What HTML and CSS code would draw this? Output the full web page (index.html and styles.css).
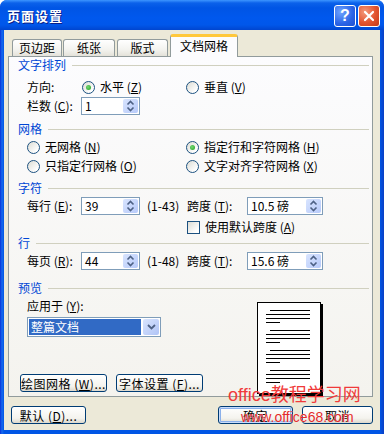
FILE: index.html
```html
<!DOCTYPE html>
<html lang="zh-CN">
<head>
<meta charset="utf-8">
<title>页面设置</title>
<link rel="stylesheet" href="styles.css">
</head>
<body>
<div class="window">
  <div class="titlebar">
    <span class="title">页面设置</span>
    <div class="tb-buttons">
      <span class="tb-btn help">?</span>
      <span class="tb-btn close"><svg width="12" height="12" viewBox="0 0 12 12"><path d="M2 2 L10 10 M10 2 L2 10" stroke="#fff" stroke-width="2.2" stroke-linecap="round"/></svg></span>
    </div>
  </div>
  <div class="client">
    <div class="tabs">
      <div class="tab t1">页边距</div>
      <div class="tab t2">纸张</div>
      <div class="tab t3">版式</div>
      <div class="tab active">文档网格</div>
    </div>
    <div class="panel">
      <div class="gh">文字排列</div>
      <div class="row r-dir">
        <span class="lbl w55">方向:</span>
        <span class="opt w104"><span class="radio on"></span>水平 (<u>Z</u>)</span>
        <span class="opt"><span class="radio"></span>垂直 (<u>V</u>)</span>
      </div>
      <div class="row r-col">
        <span class="lbl w54">栏数 (<u>C</u>):</span>
        <span class="spin w59"><span class="val">1</span><span class="spb"><svg width="11" height="14" viewBox="0 0 11 14"><path d="M2.5 5.5 L5.5 2.5 L8.5 5.5 M2.5 8.5 L5.5 11.5 L8.5 8.5" fill="none" stroke="#4d6185" stroke-width="1.6"/></svg></span></span>
      </div>
      <div class="gh mt6">网格</div>
      <div class="row r-g1">
        <span class="opt w159"><span class="radio"></span>无网格 (<u>N</u>)</span>
        <span class="opt"><span class="radio on"></span>指定行和字符网格 (<u>H</u>)</span>
      </div>
      <div class="row r-g2">
        <span class="opt w159"><span class="radio"></span>只指定行网格 (<u>O</u>)</span>
        <span class="opt"><span class="radio"></span>文字对齐字符网格 (<u>X</u>)</span>
      </div>
      <div class="gh mt6">字符</div>
      <div class="row r-num">
        <span class="lbl w54">每行 (<u>E</u>):</span>
        <span class="spin w59"><span class="val">39</span><span class="spb"><svg width="11" height="14" viewBox="0 0 11 14"><path d="M2.5 5.5 L5.5 2.5 L8.5 5.5 M2.5 8.5 L5.5 11.5 L8.5 8.5" fill="none" stroke="#4d6185" stroke-width="1.6"/></svg></span></span>
        <span class="range">(1-43)</span>
        <span class="lbl w61">跨度 (<u>T</u>):</span>
        <span class="spin w76"><span class="val">10.5 磅</span><span class="spb"><svg width="11" height="14" viewBox="0 0 11 14"><path d="M2.5 5.5 L5.5 2.5 L8.5 5.5 M2.5 8.5 L5.5 11.5 L8.5 8.5" fill="none" stroke="#4d6185" stroke-width="1.6"/></svg></span></span>
      </div>
      <div class="row r-chk">
        <span class="opt"><span class="check"></span>使用默认跨度 (<u>A</u>)</span>
      </div>
      <div class="gh">行</div>
      <div class="row r-num">
        <span class="lbl w54">每页 (<u>R</u>):</span>
        <span class="spin w59"><span class="val">44</span><span class="spb"><svg width="11" height="14" viewBox="0 0 11 14"><path d="M2.5 5.5 L5.5 2.5 L8.5 5.5 M2.5 8.5 L5.5 11.5 L8.5 8.5" fill="none" stroke="#4d6185" stroke-width="1.6"/></svg></span></span>
        <span class="range">(1-48)</span>
        <span class="lbl w61">跨度 (<u>T</u>):</span>
        <span class="spin w76"><span class="val">15.6 磅</span><span class="spb"><svg width="11" height="14" viewBox="0 0 11 14"><path d="M2.5 5.5 L5.5 2.5 L8.5 5.5 M2.5 8.5 L5.5 11.5 L8.5 8.5" fill="none" stroke="#4d6185" stroke-width="1.6"/></svg></span></span>
      </div>
      <div class="gh mt10">预览</div>
      <div class="preview">
        <div class="pv-left">
          <div class="row r-apply"><span class="lbl">应用于 (<u>Y</u>):</span></div>
          <div class="select">
            <span class="sel-text">整篇文档</span>
            <span class="sel-btn"><svg width="9" height="6" viewBox="0 0 9 6"><path d="M1 1 L4.5 4.5 L8 1" fill="none" stroke="#4d6185" stroke-width="1.8"/></svg></span>
          </div>
          <div class="pv-buttons">
            <span class="btn b-grid">绘图网格 (<u>W</u>)...</span>
            <span class="btn b-font">字体设置 (<u>F</u>)...</span>
          </div>
        </div>
        <div class="page">
          <svg width="66" height="94" viewBox="0 0 66 94">
            <rect x="2" y="2" width="64" height="92" fill="#000"/>
            <rect x="0.5" y="0.5" width="63" height="91" fill="#fff" stroke="#000"/>
            <g stroke="#000" stroke-width="1">
              <path d="M13 8.5H53 M9 12.5H53 M9 16.5H53 M9 20.5H23"/>
              <path d="M13 28.5H53 M9 32.5H53 M9 36.5H53 M9 40.5H23"/>
              <path d="M13 48.5H53 M9 52.5H53 M9 56.5H53 M9 60.5H23"/>
              <path d="M13 68.5H53 M9 72.5H53 M9 76.5H53 M9 80.5H23"/>
            </g>
          </svg>
        </div>
      </div>
    </div>
    <div class="footer">
      <span class="btn b-def">默认 (<u>D</u>)...</span>
      <span class="spacer"></span>
      <span class="btn b-ok focus">确定</span>
      <span class="btn b-cancel">取消</span>
    </div>
  </div>
  <div class="wm wm1">office教程学习网</div>
  <div class="wm wm2">www.office68.com</div>
</div>
</body>
</html>
```
FILE: styles.css
```css
* { box-sizing: border-box; }
html, body { margin: 0; padding: 0; }
body {
  width: 384px; height: 434px; overflow: hidden;
  font-family: "Noto Sans CJK SC", "Liberation Sans", sans-serif;
  font-size: 12px; color: #000; background: #fff;
}
u { text-decoration: underline; text-underline-offset: 1px; }

.window {
  position: relative;
  width: 384px; height: 434px;
  background: linear-gradient(90deg, #0831d9 0, #166aee 2px, #0055e5 4px, #0055e5 380px, #0b3fc4 384px);
  display: flex; flex-direction: column;
  border-radius: 7px 7px 0 0; overflow: hidden;
}
.titlebar {
  height: 30px; flex: none;
  display: flex; align-items: center; justify-content: space-between;
  padding: 1px 4px 0 7px;
  background: linear-gradient(#3d95ff 0, #0b61ea 3px, #0055e5 8px, #0058ee 18px, #0057ea 25px, #0045cf 30px);
}
.title {
  color: #fff; font-weight: bold; font-size: 13px; letter-spacing: 1px;
  text-shadow: 1px 1px 0 #0a1f86;
}
.tb-buttons { display: flex; gap: 2px; }
.tb-btn {
  width: 22px; height: 22px; border: 1px solid #fff; border-radius: 3px;
  display: flex; align-items: center; justify-content: center;
  color: #fff; font-family: "Liberation Sans", sans-serif; font-weight: bold; font-size: 16px;
}
.help { background: radial-gradient(circle at 30% 30%, #6fa4ff, #2a63e6 60%, #1e4fd0); }
.close { background: radial-gradient(circle at 30% 30%, #f49a7c, #e2532f 55%, #c23a18); }

.client {
  flex: 1; margin: 0 4px 4px 4px;
  background: #ece9d8;
  display: flex; flex-direction: column;
}
.tabs {
  height: 26px; flex: none;
  display: flex; align-items: flex-end;
  padding-left: 8px;
}
.tab {
  height: 17px; line-height: 15px; text-align: center;
  border: 1px solid #919b9c; border-bottom: none;
  border-radius: 3px 3px 0 0;
  background: linear-gradient(#ffffff, #f3f3ef 60%, #e4e2d9);
}
.t1 { width: 50px; }
.t2 { width: 52px; margin-left: 1px; }
.t3 { width: 51px; margin-left: 2px; }
.tab.active {
  width: 68px; height: 23px; margin-left: 2px; margin-bottom: -1px;
  position: relative; z-index: 1;
  background: #fcfcfe;
  border-top: 3px solid #ffc83c;
  line-height: 18px;
  border-radius: 3px 3px 0 0;
}

.panel {
  flex: none;
  margin-left: 4px; width: 365px; height: 341px;
  border: 1px solid #919b9c;
  background: linear-gradient(#fcfcfe, #f4f3ee);
  padding: 0 3px 0 9px;
}
.gh {
  display: flex; align-items: center; height: 16px; line-height: 16px;
  color: #0046d5;
}
.gh::after {
  content: ""; flex: 1; height: 1px; background: #d0d0bf; margin-left: 6px; margin-top: 1px;
}
.mt6 { margin-top: 6px; }
.mt10 { margin-top: 10px; }

.row { display: flex; align-items: center; padding-left: 9px; line-height: 16px; white-space: nowrap; }
.r-dir { height: 18px; margin-top: 5px; }
.r-col { height: 18px; margin-top: 1px; }
.r-g1 { height: 16px; margin-top: 2px; }
.r-g2 { height: 16px; margin-top: 3px; }
.r-num { height: 18px; margin-top: 1px; }
.r-chk { height: 16px; margin-top: 4px; padding-left: 168px; }

.lbl { display: inline-block; }
.w54 { width: 54px; }
.w55 { width: 55px; }
.w61 { width: 60px; }
.w104 { width: 104px; }
.w159 { width: 159px; }
.w59 { width: 59px; }
.w76 { width: 76px; }

.opt { display: inline-flex; align-items: center; }
.radio {
  width: 13px; height: 13px; border-radius: 50%;
  border: 1px solid #1c5180;
  background: linear-gradient(135deg, #dcdcd4, #ffffff 80%);
  margin-right: 4px; position: relative; flex: none;
}
.radio.on::after {
  content: ""; position: absolute; left: 3px; top: 3px;
  width: 5px; height: 5px; border-radius: 50%;
  background: radial-gradient(circle at 40% 40%, #74d774, #21a121);
}
.opt .radio { margin-right: 5px; }
.check {
  width: 13px; height: 13px; border: 1px solid #1c5180;
  background: linear-gradient(135deg, #dcdcd4, #ffffff 80%);
  margin-right: 5px; margin-left: 1px; flex: none;
}

.spin {
  height: 18px; border: 1px solid #7f9db9; background: #fff;
  display: inline-flex; align-items: center; justify-content: space-between;
  padding: 1px 1px 1px 3px;
}
.spin .val { line-height: 14px; }
.spb {
  width: 15px; height: 14px; border-radius: 2px;
  background: linear-gradient(135deg, #d8e4fe, #b7cafa);
  display: flex; align-items: center; justify-content: center;
}
.range { width: 47px; padding-left: 7px; }

.preview { display: flex; }
.pv-left { width: 239px; display: flex; flex-direction: column; }
.r-apply { height: 16px; margin-top: 2px; }
.select {
  margin-top: 3px; margin-left: 9px; width: 134px; height: 20px;
  border: 1px solid #7f9db9; background: #fff;
  display: flex; align-items: center; padding: 1px;
}
.sel-text {
  flex: 1; height: 16px; line-height: 16px;
  background: #316ac5; color: #fff; padding-left: 2px; margin-right: 2px;
}
.sel-btn {
  width: 16px; height: 16px; border-radius: 2px;
  background: linear-gradient(135deg, #d8e4fe, #b0c4f6);
  display: flex; align-items: center; justify-content: center;
}
.pv-buttons { display: flex; margin-top: 37px; margin-left: 2px; gap: 9px; }
.btn {
  display: inline-flex; align-items: center; justify-content: center;
  height: 18px; border: 1px solid #003c74; border-radius: 3px;
  background: linear-gradient(#ffffff, #f4f3ee 70%, #dcd8cc);
  white-space: nowrap; letter-spacing: 0.5px;
}
.b-grid { width: 87px; }
.b-font { width: 87px; }
.page { margin-top: 6px; line-height: 0; }

.footer {
  flex: 1; display: flex; align-items: flex-start;
  padding: 9px 7px 0 7px;
}
.spacer { flex: 1; }
.b-def { width: 75px; }
.b-ok { width: 75px; }
.b-cancel { width: 71px; margin-left: 9px; }
.btn.focus { box-shadow: inset 0 0 0 1px #c9dcfb, inset 0 0 0 2px #8bb0ea; }

.wm { position: absolute; white-space: nowrap; z-index: 5; }
.wm1 {
  left: 228px; top: 385px;
  font-family: "Liberation Sans", "Noto Sans CJK SC", sans-serif;
  font-size: 18px; line-height: 20px; color: #f03a3a;
}
.wm2 {
  left: 241px; top: 409px;
  font-family: "Liberation Sans", sans-serif;
  font-size: 14px; line-height: 16px; color: #e32a2a;
  text-shadow: 0 0 1px #fff;
}
```
